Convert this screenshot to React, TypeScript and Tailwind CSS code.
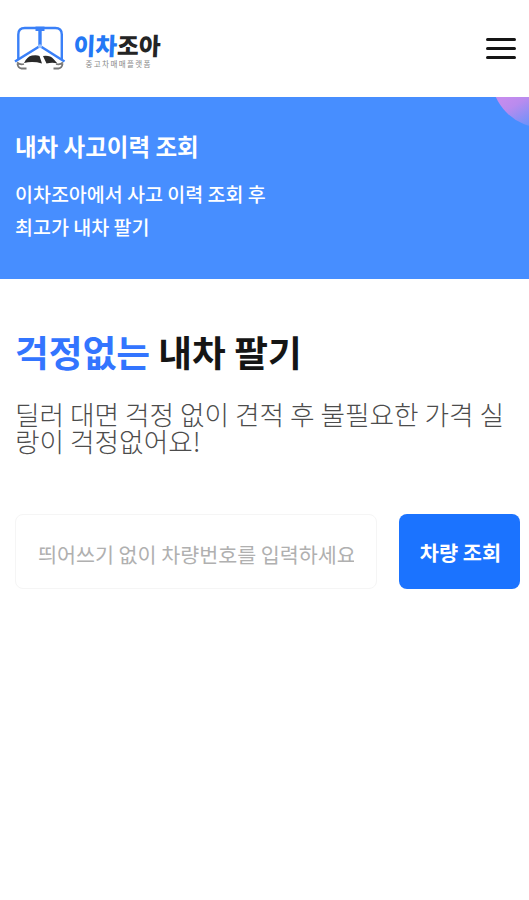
const fontStack = "font-['Noto_Sans_CJK_KR','Noto_Sans',sans-serif]";

function Logo() {
  return (
    <a href="#" aria-label="이차조아" className="block">
      <svg width="150" height="50" viewBox="14 23 150 50" fill="none">
        {/* Lift frame */}
        <g stroke="#3a80f8" strokeWidth="2.4" strokeLinejoin="round">
          <path d="M18.300 58V33.500q0-6.500 6.500-6.500h30.500q6.500 0 6.500 6.500V58" />
          <path d="M40 28v16" strokeWidth="3.4" />
          <path d="M35.500 27.800h9" strokeWidth="4.400" />
          <path d="M15 60.500 40 45l24.500 15.500" strokeWidth="2.600" />
        </g>
        <circle cx="40" cy="45.300" r="2" fill="#9cc2ff" />
        {/* Cars */}
        <path d="M24 62q3-6.500 8-7.500 5-.8 7.500.5l2.500 7.500q-9-2.500-18-.5z" fill="#2a2a2a" />
        <path d="M43 55q7-1 10.500 3l4 4.500q-5-1.700-11 0z" fill="#2a2a2a" />
        <g stroke="#777" strokeWidth="1.800">
          <path d="M17 61.500q3 2.500 7 1.500M17.500 63q.5 4 4 4.500h5" />
          <path d="M63 61.500q-3 2.500-7 1.500M62.500 63q-.5 4-4 4.500h-5" />
        </g>
        <g fontFamily="'Noto Sans CJK KR', sans-serif">
          <g fontSize="24" fontWeight="900" transform="translate(1.500 0) skewX(-2.500)">
            <text x="74" y="54" textLength="43.500" lengthAdjust="spacingAndGlyphs" fill="#2478f5">이차</text>
            <text x="117.500" y="54" textLength="43.500" lengthAdjust="spacingAndGlyphs" fill="#242424">조아</text>
          </g>
          <text x="85.500" y="65.500" fontSize="7.500" textLength="65" fill="#888">중고차매매플랫폼</text>
        </g>
      </svg>
    </a>
  );
}

function Header() {
  return (
    <header className="flex h-[97px] items-center justify-between pl-3.5 pr-[13px]">
      <Logo />
      <button aria-label="메뉴" className="flex flex-col gap-[6px]">
        <span className="h-[3px] w-[30px] rounded-full bg-[#151515]" />
        <span className="h-[3px] w-[30px] rounded-full bg-[#151515]" />
        <span className="h-[3px] w-[30px] rounded-full bg-[#151515]" />
      </button>
    </header>
  );
}

function Banner() {
  return (
    <section className="relative h-[182px] overflow-hidden bg-[#478eff] px-[15px] pt-[32px] text-white">
      <h2 className="text-[23.500px] font-bold leading-[34px]">내차 사고이력 조회</h2>
      <p className="mt-[14px] text-[19.500px] font-medium leading-[33px]">
        이차조아에서 사고 이력 조회 후
        <br />
        최고가 내차 팔기
      </p>
      {/* Corner decoration */}
      <div className="absolute -top-[75px] left-[491px] size-[106px] rounded-full bg-[linear-gradient(150deg,#c58cee_50%,#b98bee_58%,#6f92fa_74%)]" />
    </section>
  );
}

export default function App() {
  return (
    <div className={`min-h-screen w-full bg-white ${fontStack}`}>
      <Header />
      <Banner />
      <main className="pl-[15px] pr-[9px] pt-[45px]">
        <h1 className="text-[36.700px] font-bold leading-[54px] text-[#151515]">
          <span className="text-[#3375ff]">걱정없는</span> 내차 팔기
        </h1>
        <p className="mt-[22px] whitespace-nowrap text-[26.700px] font-light leading-[27px] text-[#4c4c4c]">
          딜러 대면 걱정 없이 견적 후 불필요한 가격 실
          <br />
          랑이 걱정없어요!
        </p>
        <form className="mt-[60px] flex gap-[22px]" onSubmit={(e) => e.preventDefault()}>
          <input
            placeholder="띄어쓰기 없이 차량번호를 입력하세요"
            className="h-[75px] w-[362px] rounded-lg border border-[#f5f5f5] px-[22px] pt-[4px] text-[20.650px] outline-none placeholder:text-[#b0b0b0]"
          />
          <button className="h-[75px] w-[121px] rounded-lg bg-[#1b73ff] pt-[3px] pl-[2px] text-[20.800px] font-bold text-white">
            차량 조회
          </button>
        </form>
      </main>
    </div>
  );
}
